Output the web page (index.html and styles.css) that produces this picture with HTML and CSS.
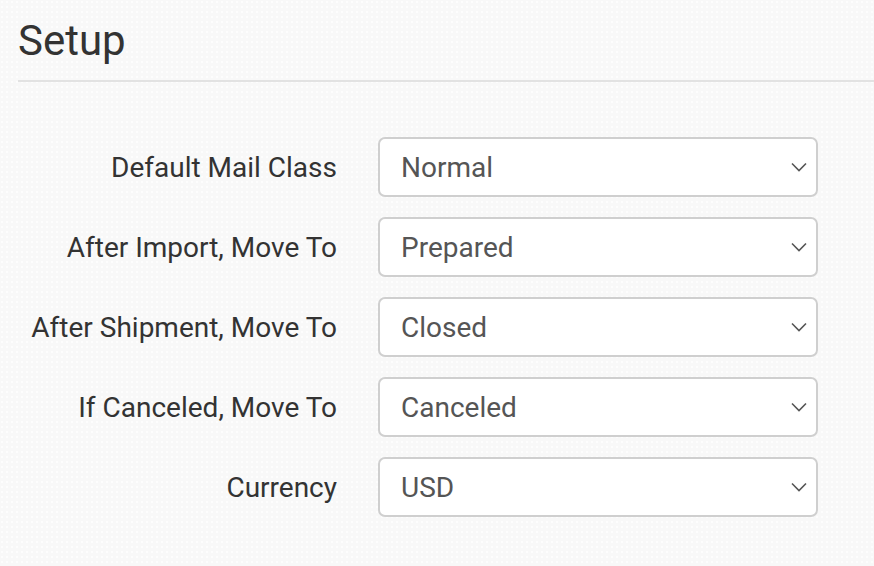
FILE: index.html
```html
<!DOCTYPE html>
<html lang="en">
<head>
<meta charset="utf-8">
<title>Setup</title>
<link rel="stylesheet" href="styles.css">
</head>
<body>
<div class="page">
  <h1 class="title">Setup</h1>
  <form class="form">
    <label class="label" for="mail">Default Mail Class</label>
    <div class="select-wrap">
      <select id="mail" class="select"><option>Normal</option></select>
      <svg class="chev" width="16" height="10" viewBox="0 0 16 10"><path d="M1 1.5 L8 8.5 L15 1.5" fill="none" stroke="#555" stroke-width="1.6"/></svg>
    </div>
    <label class="label" for="imp">After Import, Move To</label>
    <div class="select-wrap">
      <select id="imp" class="select"><option>Prepared</option></select>
      <svg class="chev" width="16" height="10" viewBox="0 0 16 10"><path d="M1 1.5 L8 8.5 L15 1.5" fill="none" stroke="#555" stroke-width="1.6"/></svg>
    </div>
    <label class="label" for="ship">After Shipment, Move To</label>
    <div class="select-wrap">
      <select id="ship" class="select"><option>Closed</option></select>
      <svg class="chev" width="16" height="10" viewBox="0 0 16 10"><path d="M1 1.5 L8 8.5 L15 1.5" fill="none" stroke="#555" stroke-width="1.6"/></svg>
    </div>
    <label class="label" for="canc">If Canceled, Move To</label>
    <div class="select-wrap">
      <select id="canc" class="select"><option>Canceled</option></select>
      <svg class="chev" width="16" height="10" viewBox="0 0 16 10"><path d="M1 1.5 L8 8.5 L15 1.5" fill="none" stroke="#555" stroke-width="1.6"/></svg>
    </div>
    <label class="label" for="cur">Currency</label>
    <div class="select-wrap">
      <select id="cur" class="select"><option>USD</option></select>
      <svg class="chev" width="16" height="10" viewBox="0 0 16 10"><path d="M1 1.5 L8 8.5 L15 1.5" fill="none" stroke="#555" stroke-width="1.6"/></svg>
    </div>
  </form>
</div>
</body>
</html>
```
FILE: styles.css
```css
html, body {
  margin: 0;
  padding: 0;
}
body {
  background-color: #f8f8f8;
  background-image: radial-gradient(circle at 2px 2px, rgba(255,255,255,0.7) 1px, transparent 1.5px);
  background-size: 5px 5px;
  font-family: Roboto, "Liberation Sans", sans-serif;
  width: 874px;
  height: 566px;
  overflow: hidden;
}
.page {
  padding-left: 18px;
}
.title {
  margin: 0;
  padding: 16px 0 15px;
  font-size: 42px;
  font-weight: 400;
  line-height: 49px;
  color: #333;
  border-bottom: 2px solid #e2e2e2;
}
.form {
  display: grid;
  grid-template-columns: 319px 440px;
  column-gap: 41px;
  row-gap: 20px;
  align-items: center;
  padding-top: 55px;
}
.label {
  text-align: right;
  font-size: 28px;
  color: #333;
}
.select-wrap {
  position: relative;
  height: 60px;
}
.select {
  -webkit-appearance: none;
  appearance: none;
  box-sizing: border-box;
  width: 440px;
  height: 60px;
  margin: 0;
  padding: 0 40px 0 21px;
  border: 2px solid #cfcfcf;
  border-radius: 7px;
  background: #fff;
  font-family: Roboto, "Liberation Sans", sans-serif;
  font-size: 28px;
  color: #555;
  outline: none;
}
.chev {
  position: absolute;
  left: 413px;
  top: 25px;
  pointer-events: none;
}
```
